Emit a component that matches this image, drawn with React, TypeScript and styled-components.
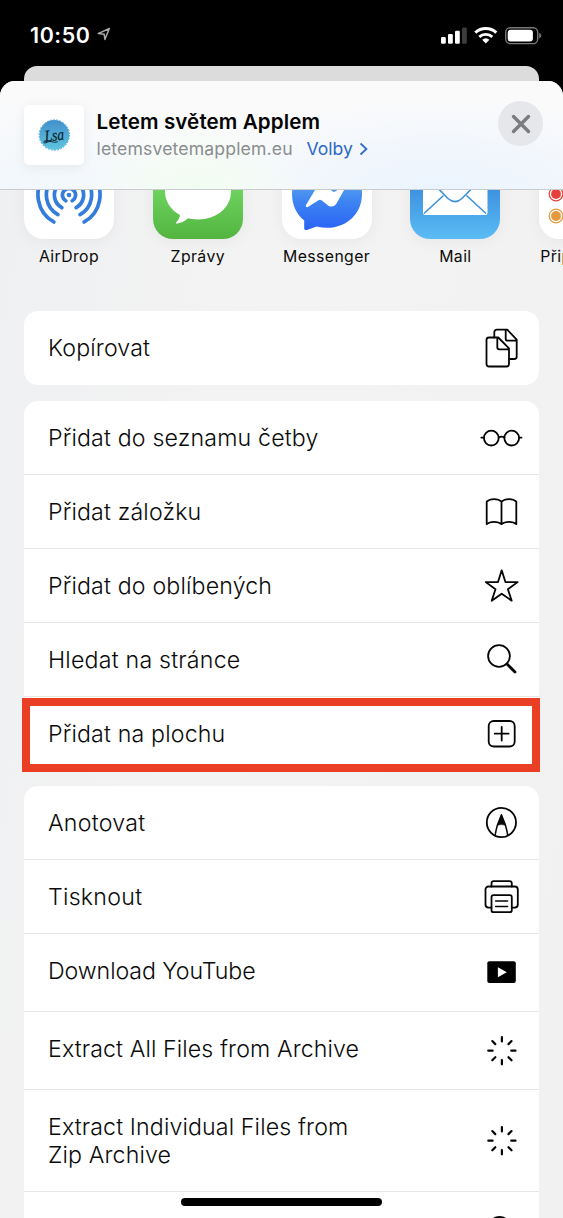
import React from "react";
import styled, { createGlobalStyle } from "styled-components";

const GlobalStyle = createGlobalStyle`
  *, *::before, *::after { box-sizing: border-box; }
  html, body { margin: 0; padding: 0; background: #000; }
  body { font-family: Inter, "Liberation Sans", sans-serif; color: #0b0b0b; }
`;

const Screen = styled.div`
  position: relative;
  display: flex;
  flex-direction: column;
  width: 563px;
  height: 1218px;
  overflow: hidden;
  background: #000;
`;

const StatusBar = styled.div`
  flex: none;
  display: flex;
  align-items: center;
  height: 66px;
  padding: 3px 21px 0 30px;
  color: #fff;
`;

const Clock = styled.span`
  width: 67px;
  font-size: 21.4px;
  font-weight: 600;
  letter-spacing: 0.6px;
`;

const StatusIcons = styled.div`
  display: flex;
  margin-left: auto;
`;

const BackCard = styled.div`
  flex: none;
  height: 15px;
  margin: 0 24px;
  border-radius: 13px 13px 0 0;
  background: #dcdcdc;
`;

const Sheet = styled.div`
  flex: 1;
  display: flex;
  flex-direction: column;
  min-height: 0;
  overflow: hidden;
  border-radius: 15px 15px 0 0;
  background: linear-gradient(100deg, #eff0f2 0%, #f3f3f3 40%, #f1f1f1 100%);
`;

const Header = styled.header`
  flex: none;
  display: flex;
  align-items: flex-start;
  height: 109px;
  padding: 24px 20px 0 24px;
  border-bottom: 1px solid #c9cbce;
  background:
    radial-gradient(ellipse 110px 70px at 197px 108px, rgba(240, 253, 240, 0.9), transparent),
    radial-gradient(ellipse 260px 90px at 440px 108px, rgba(233, 243, 254, 0.9), transparent),
    radial-gradient(ellipse 160px 90px at 40px 108px, rgba(240, 247, 252, 0.9), transparent),
    #fafafb;
`;

const Thumb = styled.div`
  display: flex;
  align-items: center;
  justify-content: center;
  width: 60px;
  height: 60px;
  border-radius: 5px;
  background: #fff;
  box-shadow: 0 2px 12px rgba(0, 0, 0, 0.07);
`;

const PageInfo = styled.div`
  flex: 1;
  padding: 3px 0 0 12.5px;
`;

const PageTitle = styled.div`
  font-size: 20.6px;
  line-height: 27px;
  font-weight: 600;
  letter-spacing: 0.1px;
  color: #050505;
`;

const PageMeta = styled.div`
  display: flex;
  align-items: center;
  line-height: 28px;
  font-size: 17.6px;
`;

const Domain = styled.span`
  width: 210px;
  letter-spacing: 0.15px;
  color: #8b8c8f;
`;

const Options = styled.span`
  width: 52.5px;
  color: #2c69c4;
`;

const CloseButton = styled.button`
  display: flex;
  align-items: center;
  justify-content: center;
  width: 45px;
  height: 45px;
  margin-top: -4px;
  padding: 0;
  border: 0;
  border-radius: 50%;
  background: #e6e7ea;
`;

const AppStrip = styled.div`
  flex: none;
  display: flex;
  align-items: flex-end;
  gap: 38.8px;
  height: 77px;
  padding-left: 24px;
  overflow: hidden;
`;

const AppItem = styled.div`
  flex: none;
  display: flex;
  flex-direction: column;
  align-items: center;
  width: 90px;
`;

const AppTile = styled.div<{ $fill: string }>`
  width: 90px;
  height: 90px;
  border-radius: 20px;
  overflow: hidden;
  background: ${(p) => p.$fill};
  box-shadow: 0 2px 16px rgba(0, 0, 0, 0.05);
`;

const AppLabel = styled.span`
  height: 28px;
  padding-top: 8px;
  line-height: 20px;
  font-size: 15.8px;
  letter-spacing: 0.4px;
  white-space: nowrap;
`;

const Actions = styled.main`
  display: flex;
  flex-direction: column;
  gap: 15px;
  padding: 44px 24px 0;
`;

const Group = styled.section`
  flex: none;
  border-radius: 14px;
  background: #fff;

  &:first-child {
    margin-bottom: 1px;
  }
`;

const Row = styled.div<{ $height?: number }>`
  display: flex;
  align-items: center;
  justify-content: space-between;
  height: ${(p) => p.$height ?? 74}px;
  padding: 0 15px 0 24px;

  &:not(:last-child) {
    box-shadow: inset 0 -1px #e6e6e7;
  }
`;

const RowLabel = styled.span<{ $spacing?: number; $lift?: number }>`
  padding-bottom: ${(p) => p.$lift ?? 0}px;
  font-size: 23.2px;
  font-weight: 300;
  line-height: 28.5px;
  letter-spacing: ${(p) => p.$spacing ?? 0.15}px;
  white-space: pre-line;
`;

const Highlight = styled.div`
  position: absolute;
  top: 698px;
  left: 22px;
  width: 518px;
  height: 74px;
  border: 8px solid #ea3f25;
`;

const HomeIndicator = styled.div`
  position: absolute;
  bottom: 12px;
  left: 181px;
  width: 201px;
  height: 8px;
  border-radius: 4px;
  background: #000;
`;

const Glyph = ({ children, w = 1.8 }: { children: React.ReactNode; w?: number }) => (
  <svg width="45" height="44" viewBox="0 0 45 44" fill="none" stroke="#050505" strokeWidth={w} strokeLinejoin="round" strokeLinecap="round">
    {children}
  </svg>
);

const CopyIcon = () => (
  <Glyph>
    <path d="M19.300 11.500H10a2.500 2.500 0 0 0-2.500 2.500v24a2.500 2.500 0 0 0 2.500 2.500h17.500a2.500 2.500 0 0 0 2.500-2.500V22.300L19.300 11.500H18.300V21.300a2 2 0 0 0 2 2h9.700" />
    <path d="M15.300 11.500V6.200a2.500 2.500 0 0 1 2.500-2.500H28.300L37.700 13.600V30.500a2.500 2.500 0 0 1-2.500 2.500H30M26.700 3.700V12.700a2 2 0 0 0 2 2h9" />
  </Glyph>
);

const GlassesIcon = () => (
  <Glyph>
    <circle cx="12.300" cy="22.100" r="7.400" />
    <circle cx="32.700" cy="22.100" r="7.400" />
    <path d="M2.300 21.600h2.600M40.200 21.600h2.300M19.600 21.400q3-1.600 6 0" />
  </Glyph>
);

const BookIcon = () => (
  <Glyph>
    <path d="M7.700 34.200V11.700C11 8.200 19 8.200 22.500 11.700C26 8.200 34 8.200 37.300 11.700V34.200C34 31 26 31 22.500 34.200C19 31 11 31 7.700 34.200ZM22.500 11.700V34.200" />
  </Glyph>
);

const StarIcon = () => (
  <Glyph>
    <path d="M22.700 6.300L26.400 18.100H38.600L28.900 25.300L32.700 36.700L22.700 29.700L12.700 36.700L16.500 25.300L6.800 18.100H19Z" />
  </Glyph>
);

const SearchIcon = () => (
  <Glyph>
    <circle cx="20" cy="18" r="10.900" />
    <path d="M28 26L36 34" strokeWidth="2.800" />
  </Glyph>
);

const PlusIcon = () => (
  <Glyph>
    <rect x="9.700" y="9" width="26" height="25.500" rx="5" />
    <path d="M22.700 14.900v13.700M15.800 21.700h13.800" />
  </Glyph>
);

const MarkupIcon = () => (
  <Glyph>
    <circle cx="22.400" cy="21.500" r="14.600" />
    <path d="M22.400 14L18.400 24Q17 29 16.200 34M22.400 14L26.400 24Q27.900 29 28.700 34" strokeWidth="1.500" />
    <path d="M22.400 13.500L18.700 24.300Q22.400 22.700 26.200 24.300Z" fill="#0a0a0a" strokeWidth="0.500" />
  </Glyph>
);

const PrinterIcon = () => (
  <Glyph>
    <path d="M12.500 11.500V8.500a2.300 2.300 0 0 1 2.300-2.300H30.500a2.300 2.300 0 0 1 2.300 2.300V11.500" />
    <path d="M12.500 32.600H9.500a3 3 0 0 1-3-3V14.500a3 3 0 0 1 3-3H35.800a3 3 0 0 1 3 3V29.600a3 3 0 0 1-3 3H32.800" />
    <rect x="12.500" y="20.200" width="20.300" height="17" rx="2" />
    <path d="M16.600 26.100h12M16.600 31.400h12" strokeWidth="1.500" />
  </Glyph>
);

const VideoIcon = () => (
  <Glyph>
    <rect x="8.300" y="10.200" width="28.500" height="21.800" rx="2" fill="#000" stroke="none" />
    <path d="M18.900 16.200V26.300L27.800 21.250Z" fill="#fff" stroke="none" />
  </Glyph>
);

const SpinnerIcon = () => (
  <Glyph>
    {[0, 45, 90, 135, 180, 225, 270, 315].map((a) => (
      <path key={a} d="M22.900 12.400V8.100" transform={`rotate(${a} 22.900 21.700)`} strokeWidth="2.200" />
    ))}
  </Glyph>
);

const RoundIcon = () => (
  <Glyph>
    <circle cx="20.500" cy="19" r="11" strokeWidth="2" />
  </Glyph>
);

const arc = (r: number) =>
  `M${45 - r * 0.49} ${46 + r * 0.87}A${r} ${r} 0 1 1 ${45 + r * 0.49} ${46 + r * 0.87}`;

const AirDropArt = () => (
  <svg width="90" height="90" fill="none" stroke="#357ddc" strokeWidth="3.700" strokeLinecap="round">
    <circle cx="45" cy="46" r="2.300" fill="#357ddc" stroke="none" />
    {[6.6, 14.6, 22.6, 31].map((r) => (
      <path key={r} d={arc(r)} />
    ))}
  </svg>
);

const MessagesArt = () => (
  <svg width="90" height="90" fill="#fff">
    <path d="M45 14C63 14 78 26 78 42.500S63 70.500 45 70.500C41.500 70.500 38 70 35 69.300C32 72 27.500 74.500 23.300 74.600C22.600 74.500 22.700 73.800 23.200 73.300C25.500 71 26.800 68.500 27 66C18 61 12 52.500 12 42.500C12 26 27 14 45 14Z" />
  </svg>
);

const MessengerArt = () => (
  <svg width="90" height="90">
    <defs>
      <linearGradient id="msgr" x1="0" y1="0" x2="0" y2="1">
        <stop offset="0.300" stopColor="#5aa4ee" />
        <stop offset="0.600" stopColor="#3d84f2" />
        <stop offset="1" stopColor="#2a62f6" />
      </linearGradient>
    </defs>
    <path d="M45 11C65 11 80 25.500 80 45S65 78.800 45 78.800C41.500 78.800 38 78.300 34.500 77.400L25 80.900C23.300 81.500 22.200 80.700 22.200 79V71.500C14.500 65 10 56 10 45C10 25.500 25 11 45 11Z" fill="url(#msgr)" />
    <path d="M24 56L34.500 38.500C36.500 35 40.500 34.500 43.500 37L50.500 42.300Q52 43.300 53.500 42.300L66 34L54.500 54.500C52.500 58 48.500 58.500 45.500 56L39.500 51.300Q38 50.300 36.500 51.300L25.500 58.300Q23.300 58.500 24 56Z" fill="#fff" />
  </svg>
);

const MailArt = () => (
  <svg width="90" height="90" fill="none" stroke="#3c92dc" strokeWidth="1.600">
    <rect x="13" y="23" width="64.500" height="43" rx="2" fill="#fff" stroke="none" />
    <path d="M14 64.500L33.500 46.500M76 64.500L56.500 46.500M14 25L38 49.500Q45 55.700 52 49.500L76 25" />
  </svg>
);

const RemindersArt = () => (
  <svg width="90" height="90" fill="none">
    {[
      { y: 23, c: "#3a82e8" },
      { y: 45, c: "#e5413a" },
      { y: 67, c: "#e6983d" },
    ].map(({ y, c }) => (
      <g key={y}>
        <circle cx="17" cy={y} r="6.800" stroke={c} strokeWidth="1.200" />
        <circle cx="17" cy={y} r="4.900" fill={c} />
      </g>
    ))}
  </svg>
);

const SiteLogo = () => (
  <svg width="32" height="32" viewBox="0 0 32 32">
    <defs>
      <linearGradient id="site" x1="0" y1="0" x2="0" y2="1">
        <stop offset="0" stopColor="#438fcd" />
        <stop offset="1" stopColor="#5fc6df" />
      </linearGradient>
    </defs>
    <circle cx="16.300" cy="16" r="14.900" fill="url(#site)" />
    <circle cx="16.300" cy="16" r="15.200" fill="none" stroke="#4da6d4" strokeWidth="1" strokeDasharray="1.700 1.480" />
    <g transform="rotate(-6 16 16)">
      <text x="6.500" y="21.500" fontFamily="Liberation Serif, serif" fontStyle="italic" fontSize="16" fill="#0d1e2b" stroke="#0d1e2b" strokeWidth="0.250" textLength="19.500" lengthAdjust="spacingAndGlyphs">Lsa</text>
      <path d="M9 21.500C3.500 19.500 4 24.500 8.500 22.500S14 24.500 19 23" fill="none" stroke="#0d1e2b" strokeWidth="0.900" />
    </g>
  </svg>
);

const white = "#fff";
const apps = [
  { name: "AirDrop", fill: white, art: <AirDropArt /> },
  { name: "Zprávy", fill: "linear-gradient(#86ea74 20%, #6bcf5b 50%, #53b540)", art: <MessagesArt /> },
  { name: "Messenger", fill: white, art: <MessengerArt /> },
  { name: "Mail", fill: "linear-gradient(#2a72dc, #3e92df 45%, #5bbcf5)", art: <MailArt /> },
  { name: "Připomínky", fill: white, art: <RemindersArt /> },
];

type Action = { label: string; icon: React.ReactNode; height?: number; spacing?: number; lift?: number };

const groups: Action[][] = [
  [{ label: "Kopírovat", icon: <CopyIcon /> }],
  [
    { label: "Přidat do seznamu četby", icon: <GlassesIcon /> },
    { label: "Přidat záložku", icon: <BookIcon /> },
    { label: "Přidat do oblíbených", icon: <StarIcon /> },
    { label: "Hledat na stránce", icon: <SearchIcon />, spacing: 0.2 },
    { label: "Přidat na plochu", icon: <PlusIcon /> },
  ],
  [
    { label: "Anotovat", icon: <MarkupIcon />, spacing: 0.25 },
    { label: "Tisknout", icon: <PrinterIcon />, spacing: 0.25 },
    { label: "Download YouTube", icon: <VideoIcon />, height: 78, spacing: -0.1, lift: 4 },
    { label: "Extract All Files from Archive", icon: <SpinnerIcon />, height: 78, spacing: 0.1, lift: 4 },
    { label: "Extract Individual Files from\nZip Archive", icon: <SpinnerIcon />, height: 102, spacing: 0.12 },
    { label: "", icon: <RoundIcon />, height: 78 },
  ],
];

export default function App() {
  return (
    <Screen>
      <GlobalStyle />
      <StatusBar>
        <Clock>10:50</Clock>
        <svg width="14" height="15" viewBox="0 0 14 15" fill="none" stroke="#a9a9a9" strokeWidth="1.500" strokeLinejoin="round">
          <path d="M12.300 1.500L7.900 12.500L7.200 7.300L1.200 6.600Z" />
        </svg>
        <StatusIcons>
          <svg width="102" height="20" viewBox="0 0 102 20">
            <g fill="#fff">
              <rect x="1" y="12" width="4.800" height="6.800" rx="1.300" />
              <rect x="8" y="9" width="4.800" height="9.800" rx="1.300" />
              <rect x="15" y="5.700" width="4.800" height="13.100" rx="1.300" />
              <rect x="22" y="2.600" width="4.800" height="16.200" rx="1.300" fill="#3c3c3c" />
            </g>
            <g fill="none" stroke="#fff">
              <path d="M35.300 7.600A15.600 15.600 0 0 1 56.300 7.600" strokeWidth="3" />
              <path d="M39.300 11.900A9.700 9.700 0 0 1 52.300 11.900" strokeWidth="2.800" />
            </g>
            <path d="M42.200 14.700A5.600 5.600 0 0 1 49.400 14.700L45.800 18.600Z" fill="#fff" />
            <rect x="65.700" y="2.700" width="32" height="15.900" rx="4.600" fill="none" stroke="#787878" strokeWidth="1.400" />
            <rect x="67.700" y="4.800" width="25.200" height="11.800" rx="3" fill="#fff" />
            <path d="M99.200 7.800Q101.300 8.700 101.300 10.600T99.200 13.400Z" fill="#787878" />
          </svg>
        </StatusIcons>
      </StatusBar>
      <BackCard />
      <Sheet>
        <Header>
          <Thumb>
            <SiteLogo />
          </Thumb>
          <PageInfo>
            <PageTitle>Letem světem Applem</PageTitle>
            <PageMeta>
              <Domain>letemsvetemapplem.eu</Domain>
              <Options>Volby</Options>
              <svg width="9" height="14" viewBox="0 0 9 14" fill="none" stroke="#2c69c4" strokeWidth="1.700">
                <path d="M1.500 1.500L7.500 7L1.500 12.500" />
              </svg>
            </PageMeta>
          </PageInfo>
          <CloseButton aria-label="Zavřít">
            <svg width="20" height="20" viewBox="0 0 20 20" stroke="#7c7c80" strokeWidth="3.400" strokeLinecap="round">
              <path d="M2.500 2.500L17.500 17.500M17.500 2.500L2.500 17.500" />
            </svg>
          </CloseButton>
        </Header>
        <AppStrip>
          {apps.map((app) => (
            <AppItem key={app.name}>
              <AppTile $fill={app.fill}>{app.art}</AppTile>
              <AppLabel>{app.name}</AppLabel>
            </AppItem>
          ))}
        </AppStrip>
        <Actions>
          {groups.map((actions, i) => (
            <Group key={i}>
              {actions.map((action) => (
                <Row key={action.label} $height={action.height}>
                  <RowLabel $spacing={action.spacing} $lift={action.lift}>{action.label}</RowLabel>
                  {action.icon}
                </Row>
              ))}
            </Group>
          ))}
        </Actions>
      </Sheet>
      <Highlight />
      <HomeIndicator />
    </Screen>
  );
}
